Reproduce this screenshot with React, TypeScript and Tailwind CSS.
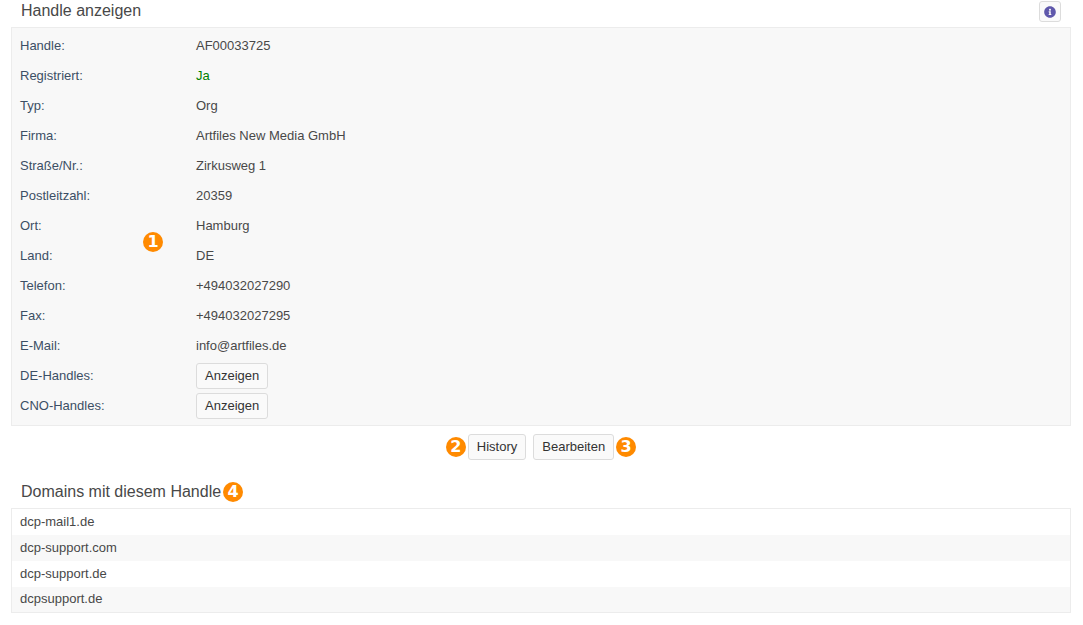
import type { ReactNode } from "react";
import { FaInfoCircle } from "react-icons/fa";

interface Field {
  label: string;
  value: ReactNode;
}

const domains = ["dcp-mail1.de", "dcp-support.com", "dcp-support.de", "dcpsupport.de"];

function Button({ children }: { children: ReactNode }) {
  return (
    <button
      type="button"
      className="h-[26px] cursor-pointer rounded-[3px] border border-[#dcdcdc] bg-[#fafafa] px-2 text-[13px] leading-4 text-[#333] hover:bg-[#f0f0f0]"
    >
      {children}
    </button>
  );
}

function Badge({ number }: { number: number }) {
  return (
    <span className="flex size-5 shrink-0 items-center justify-center rounded-full bg-[#ff8a00] font-['DejaVu_Sans',sans-serif] text-base leading-5 font-bold text-white">
      {number}
    </span>
  );
}

const fields: Field[] = [
  { label: "Handle:", value: "AF00033725" },
  { label: "Registriert:", value: <span className="text-[#008000]">Ja</span> },
  { label: "Typ:", value: "Org" },
  { label: "Firma:", value: "Artfiles New Media GmbH" },
  { label: "Straße/Nr.:", value: "Zirkusweg 1" },
  { label: "Postleitzahl:", value: "20359" },
  { label: "Ort:", value: "Hamburg" },
  { label: "Land:", value: "DE" },
  { label: "Telefon:", value: "+494032027290" },
  { label: "Fax:", value: "+494032027295" },
  { label: "E-Mail:", value: "info@artfiles.de" },
  { label: "DE-Handles:", value: <Button>Anzeigen</Button> },
  { label: "CNO-Handles:", value: <Button>Anzeigen</Button> },
];

export default function App() {
  return (
    <main className="bg-white pr-3 pl-[11px] font-['Liberation_Sans',Arial,sans-serif] text-[13px] leading-4 text-[#484848]">
      <header className="flex h-[27px] items-start justify-between pt-px pr-2.5 pl-2.5">
        <h1 className="text-base leading-5">Handle anzeigen</h1>
        <button
          type="button"
          aria-label="Info"
          className="flex h-[21px] w-[22px] cursor-pointer items-center justify-center rounded-[3px] border border-[#dcdcdc] bg-[#fafafa] text-[#5f58ab]"
        >
          <FaInfoCircle size={12} />
        </button>
      </header>

      <section className="relative border border-[#ececec] bg-[#f8f8f8] px-2 pt-[3px] pb-1">
        <dl>
          {fields.map((field) => (
            <div key={field.label} className="flex h-[30px] items-center">
              <dt className="w-44 shrink-0 text-[#3c4f65]">{field.label}</dt>
              <dd>{field.value}</dd>
            </div>
          ))}
        </dl>
        {/* Marker over the field list */}
        <div className="absolute top-[204px] left-[131px]">
          <Badge number={1} />
        </div>
      </section>

      <div className="mt-2 flex items-center justify-center gap-[7px]">
        <div className="flex items-center gap-0.5">
          <Badge number={2} />
          <Button>History</Button>
        </div>
        <div className="flex items-center gap-0.5">
          <Button>Bearbeiten</Button>
          <Badge number={3} />
        </div>
      </div>

      <section className="mt-[22px]">
        <div className="flex items-center gap-0.5 pb-1.5 pl-2.5">
          <h2 className="text-base leading-5">Domains mit diesem Handle</h2>
          <Badge number={4} />
        </div>
        <table className="w-full border-collapse border border-[#ececec]">
          <tbody>
            {domains.map((domain) => (
              <tr key={domain} className="even:bg-[#f8f8f8]">
                <td className="h-[26px] px-2 py-0 align-middle">{domain}</td>
              </tr>
            ))}
          </tbody>
        </table>
      </section>
    </main>
  );
}
